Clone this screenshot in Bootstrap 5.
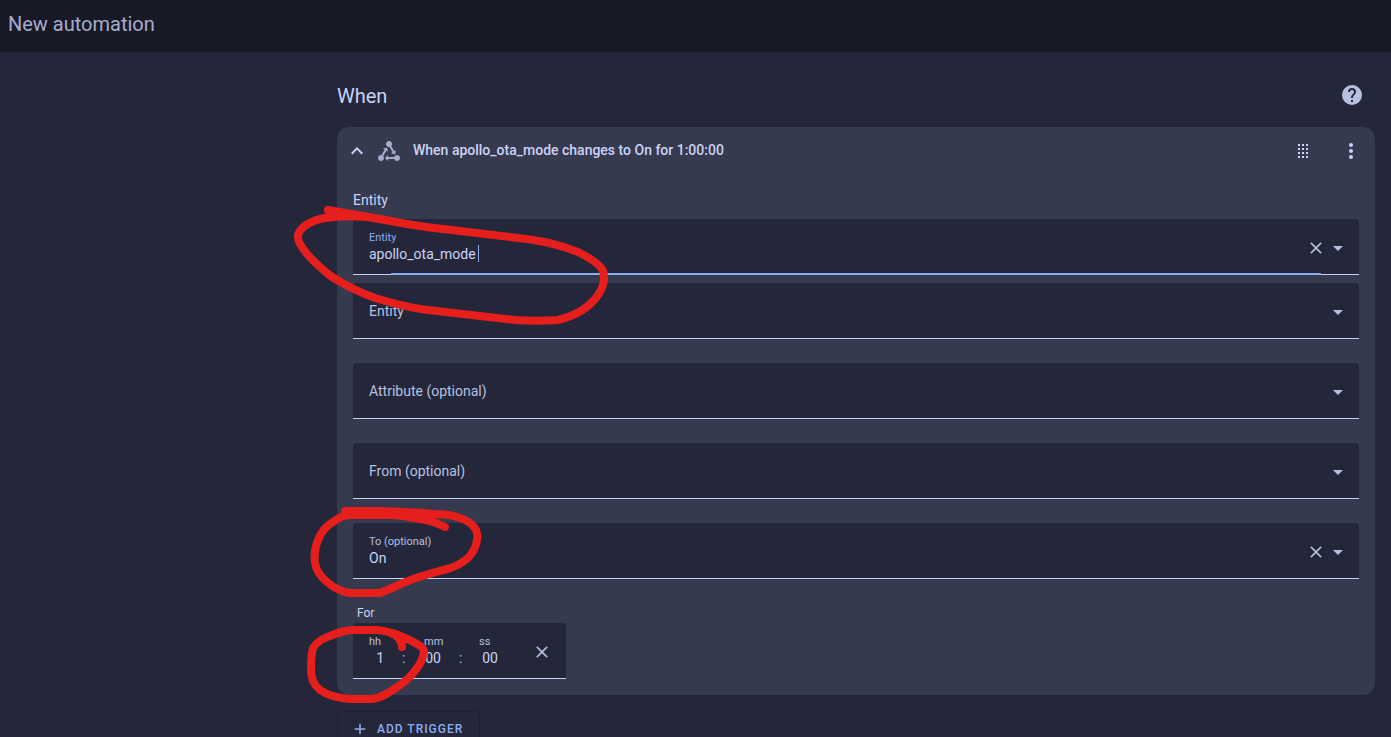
<!DOCTYPE html>
<html lang="en">
<head>
<meta charset="utf-8">
<meta name="viewport" content="width=device-width, initial-scale=1">
<title>New automation</title>
<link rel="stylesheet" href="https://cdn.jsdelivr.net/npm/bootstrap@5.3.0/dist/css/bootstrap.min.css">
<style>
  :root { --base:#24273a; --crust:#181926; --surface:#363a4f; --ink:#cad3f5; --soft:#b8c0e0; --muted:#a5adcb; --accent:#8aadf4; --pen:#e61e1c; }
  body { font-family: Roboto, "Liberation Sans", sans-serif; font-size:14px; line-height:20px; color:var(--ink); background:var(--base); }
  .topbar { background:var(--crust); min-height:52px; padding:0 8px 4px; }
  .topbar h1 { font-size:20px; line-height:24px; font-weight:400; color:var(--muted); }
  .scroller { overflow:auto; scrollbar-width:none; }
  .editor { max-width:1038px; padding-top:31px; }
  .section-head { padding-right:11px; margin-bottom:20px; }
  .section-head h2 { font-size:20px; line-height:24px; font-weight:400; padding-top:2px; }
  .section-head { height:24px; }
  .trigger { background:var(--surface); border-radius:12px; }
  .trigger-head { height:48px; padding:0 12px 0 8px; }
  .trigger-head h3 { font-size:14px; line-height:20px; font-weight:500; padding-bottom:2px; }
  .trigger-body { padding:15px 16px 16px; }
  .icon { width:24px; height:24px; fill:currentColor; display:block; flex:none; }
  .icon-sm { width:20px; height:20px; }
  .plain { background:none; border:0; padding:0; color:inherit; }
  .soft { color:var(--soft); }
  .muted-icon { color:var(--muted); }
  .group-label { line-height:20px; margin-bottom:9px; }
  .filled { position:relative; height:56px; padding:2px 9px 0 16px; background:var(--base); border-bottom:1px solid var(--ink); border-radius:4px 4px 0 0; }
  .filled label { font-size:11px; line-height:12px; color:var(--soft); }
  .filled input, .filled select { appearance:none; background:none; border:0; outline:0; padding:0; color:var(--ink); font-size:14px; line-height:20px; height:20px; }
  .filled select.unset { color:var(--soft); height:22px; padding-bottom:2px; }
  .filled.focused label { color:var(--accent); }
  .filled.focused input { width:109px; }
  .filled.focused::after { content:""; position:absolute; left:38px; right:38px; bottom:-1px; height:2px; background:var(--accent); }
  .caret { width:1px; height:17px; background:var(--accent); }
  .for-label { font-size:12px; line-height:20px; padding-left:4px; }
  .duration { width:213px; padding-right:14px; border-radius:4px 0 0 0; }
  .part { width:55px; }
  .part:nth-child(3) { width:53px; }
  .part input { width:17px; text-align:right; }
  .part:nth-child(1) input { width:15px; }
  .part:nth-child(3) input { width:19px; }
  .part .colon { margin-left:18px; color:var(--soft); line-height:20px; }
  .add { height:36px; border:1px solid #1e2030; border-radius:4px; padding:0 16px 0 13px; color:var(--accent); font-size:12px; font-weight:500; letter-spacing:1px; }
  .add .icon { width:18px; height:18px; }
  .pen-marks { position:absolute; left:0; top:0; width:300px; height:600px; overflow:visible; pointer-events:none; fill:none; stroke:var(--pen); stroke-width:8; stroke-linecap:round; stroke-linejoin:round; z-index:2; }
</style>
</head>
<body>
<svg class="d-none" aria-hidden="true">
  <symbol id="i-close" viewBox="0 0 24 24"><path d="M19,6.41L17.59,5L12,10.59L6.41,5L5,6.41L10.59,12L5,17.59L6.41,19L12,13.41L17.59,19L19,17.59L13.41,12L19,6.41Z"/></symbol>
  <symbol id="i-down" viewBox="0 0 24 24"><path d="M7,10L12,15L17,10H7Z"/></symbol>
</svg>
<div class="d-flex flex-column vh-100">
  <header class="topbar d-flex align-items-center"><h1 class="m-0">New automation</h1></header>
  <main class="scroller flex-grow-1 px-3">
    <div class="editor ms-auto">
      <div class="section-head d-flex align-items-center justify-content-between">
        <h2 class="m-0">When</h2>
        <button class="plain soft" type="button" aria-label="Help"><svg class="icon" viewBox="0 0 24 24"><path d="M15.07,11.25L14.17,12.17C13.45,12.89 13,13.5 13,15H11V14.5C11,13.39 11.45,12.39 12.17,11.67L13.41,10.41C13.78,10.05 14,9.55 14,9C14,7.89 13.1,7 12,7A2,2 0 0,0 10,9H8A4,4 0 0,1 12,5A4,4 0 0,1 16,9C16,9.88 15.64,10.67 15.07,11.25M13,19H11V17H13M12,2A10,10 0 0,0 2,12A10,10 0 0,0 12,22A10,10 0 0,0 22,12C22,6.47 17.5,2 12,2Z"/></svg></button>
      </div>

      <section class="trigger position-relative">
        <div class="trigger-head d-flex align-items-center gap-2">
          <button class="plain" type="button" aria-label="Collapse"><svg class="icon" viewBox="0 0 24 24"><path d="M7.41,15.41L12,10.83L16.59,15.41L18,14L12,8L6,14L7.41,15.41Z"/></svg></button>
          <svg class="icon muted-icon" viewBox="0 0 24 24" aria-hidden="true"><path d="M6.27 17.05C6.72 17.58 7 18.25 7 19C7 20.66 5.66 22 4 22S1 20.66 1 19 2.34 16 4 16C4.18 16 4.36 16 4.53 16.05L7.6 10.69L5.86 9.7L9.95 8.58L11.07 12.67L9.33 11.68L6.27 17.05M20 16C18.7 16 17.6 16.84 17.18 18H11V16L8 19L11 22V20H17.18C17.6 21.16 18.7 22 20 22C21.66 22 23 20.66 23 19S21.66 16 20 16M12 8C12.18 8 12.36 8 12.53 7.95L15.6 13.31L13.86 14.3L17.95 15.42L19.07 11.33L17.33 12.32L14.27 6.95C14.72 6.42 15 5.75 15 5C15 3.34 13.66 2 12 2S9 3.34 9 5 10.34 8 12 8Z"/></svg>
          <h3 class="m-0 ms-1 flex-grow-1">When apollo_ota_mode changes to On for 1:00:00</h3>
          <button class="plain me-3" type="button" aria-label="Reorder"><svg class="icon" viewBox="0 0 24 24"><path d="M7,19V17H9V19H7M11,19V17H13V19H11M15,19V17H17V19H15M7,15V13H9V15H7M11,15V13H13V15H11M15,15V13H17V15H15M7,11V9H9V11H7M11,11V9H13V11H11M15,11V9H17V11H15M7,7V5H9V7H7M11,7V5H13V7H11M15,7V5H17V7H15Z"/></svg></button>
          <button class="plain" type="button" aria-label="More actions"><svg class="icon" viewBox="0 0 24 24"><path d="M12,16A2,2 0 0,1 14,18A2,2 0 0,1 12,20A2,2 0 0,1 10,18A2,2 0 0,1 12,16M12,10A2,2 0 0,1 14,12A2,2 0 0,1 12,14A2,2 0 0,1 10,12A2,2 0 0,1 12,10M12,4A2,2 0 0,1 14,6A2,2 0 0,1 12,8A2,2 0 0,1 10,6A2,2 0 0,1 12,4Z"/></svg></button>
        </div>

        <div class="trigger-body">
          <div class="group-label">Entity</div>
          <div class="d-flex flex-column gap-4">
            <div class="d-flex flex-column gap-2">
              <div class="filled focused d-flex align-items-center">
                <div class="flex-grow-1">
                  <label class="d-block" for="entity">Entity</label>
                  <div class="d-flex align-items-center"><input id="entity" type="text" value="apollo_ota_mode"><span class="caret"></span></div>
                </div>
                <button class="plain soft" type="button" aria-label="Clear entity"><svg class="icon icon-sm"><use href="#i-close"/></svg></button>
                <svg class="icon soft" aria-hidden="true"><use href="#i-down"/></svg>
              </div>
              <div class="filled d-flex align-items-center">
                <select class="flex-grow-1 unset" aria-label="Entity"><option>Entity</option></select>
                <svg class="icon soft" aria-hidden="true"><use href="#i-down"/></svg>
              </div>
            </div>
            <div class="filled d-flex align-items-center">
              <select class="flex-grow-1 unset" aria-label="Attribute"><option>Attribute (optional)</option></select>
              <svg class="icon soft" aria-hidden="true"><use href="#i-down"/></svg>
            </div>
            <div class="filled d-flex align-items-center">
              <select class="flex-grow-1 unset" aria-label="From"><option>From (optional)</option></select>
              <svg class="icon soft" aria-hidden="true"><use href="#i-down"/></svg>
            </div>
            <div class="filled d-flex align-items-center">
              <div class="flex-grow-1">
                <label class="d-block" for="to">To (optional)</label>
                <select id="to" class="d-block w-100"><option>On</option></select>
              </div>
              <button class="plain soft" type="button" aria-label="Clear to"><svg class="icon icon-sm"><use href="#i-close"/></svg></button>
              <svg class="icon soft" aria-hidden="true"><use href="#i-down"/></svg>
            </div>
            <div>
              <div class="for-label">For</div>
              <div class="filled duration d-flex align-items-center">
                <div class="part"><label class="d-block" for="hh">hh</label><div class="d-flex"><input id="hh" type="text" inputmode="numeric" value="1"><span class="colon">:</span></div></div>
                <div class="part"><label class="d-block" for="mm">mm</label><div class="d-flex"><input id="mm" type="text" inputmode="numeric" value="00"><span class="colon">:</span></div></div>
                <div class="part"><label class="d-block" for="ss">ss</label><div class="d-flex"><input id="ss" type="text" inputmode="numeric" value="00"></div></div>
                <button class="plain soft" type="button" aria-label="Clear duration"><svg class="icon icon-sm"><use href="#i-close"/></svg></button>
              </div>
            </div>
          </div>
        </div>

        <svg class="pen-marks" viewBox="337 127 300 600" aria-hidden="true">
          <path d="M328 210L380 219C410 225 430 228 452 230L518 238C541 240 560 245 578 252C590 258 600 264 603 271C606 281 603 288 598 295C592 304 582 314 558 320C545 321 530 321 515 320L428 310C410 308 392 303 375 298C358 292 345 285 332 277C323 270 314 262 308 255C302 248 297 240 298 235C300 227 312 220 325 218C345 215 365 216 385 220"/>
          <path d="M345 511H380C400 512 418 512 433 514C444 514 453 515 460 518C466 520 471 523 474 527C477 530 478 536 477 540C476 547 473 553 468 558C462 563 455 567 447 569C436 572 424 575 413 579C402 583 391 589 380 593H350C341 592 333 587 327 582C321 577 316 570 315 563C314 555 315 547 318 540C321 532 326 526 333 522C338 518 344 515 350 515H390C400 515 410 517 420 519C429 520 437 523 445 527"/>
          <path d="M402 647C402 642 399 638 395 635C391 632 385 631 377 630H353C345 630 337 633 330 636C323 638 317 642 313 648C311 655 311 663 311 670C311 678 314 685 320 690C327 695 338 698 350 699H373C385 697 394 689 403 683C409 678 413 674 417 668C421 663 423 658 424 652C424 648 421 646 417 644C410 640 402 636 393 633"/>
        </svg>
      </section>

      <button class="add bg-transparent d-inline-flex align-items-center gap-2 text-uppercase mt-3" type="button"><svg class="icon" viewBox="0 0 24 24" aria-hidden="true"><path d="M19,13H13V19H11V13H5V11H11V5H13V11H19V13Z"/></svg>Add trigger</button>
    </div>
  </main>
</div>
<script src="https://cdn.jsdelivr.net/npm/bootstrap@5.3.0/dist/js/bootstrap.bundle.min.js"></script>
</body>
</html>
